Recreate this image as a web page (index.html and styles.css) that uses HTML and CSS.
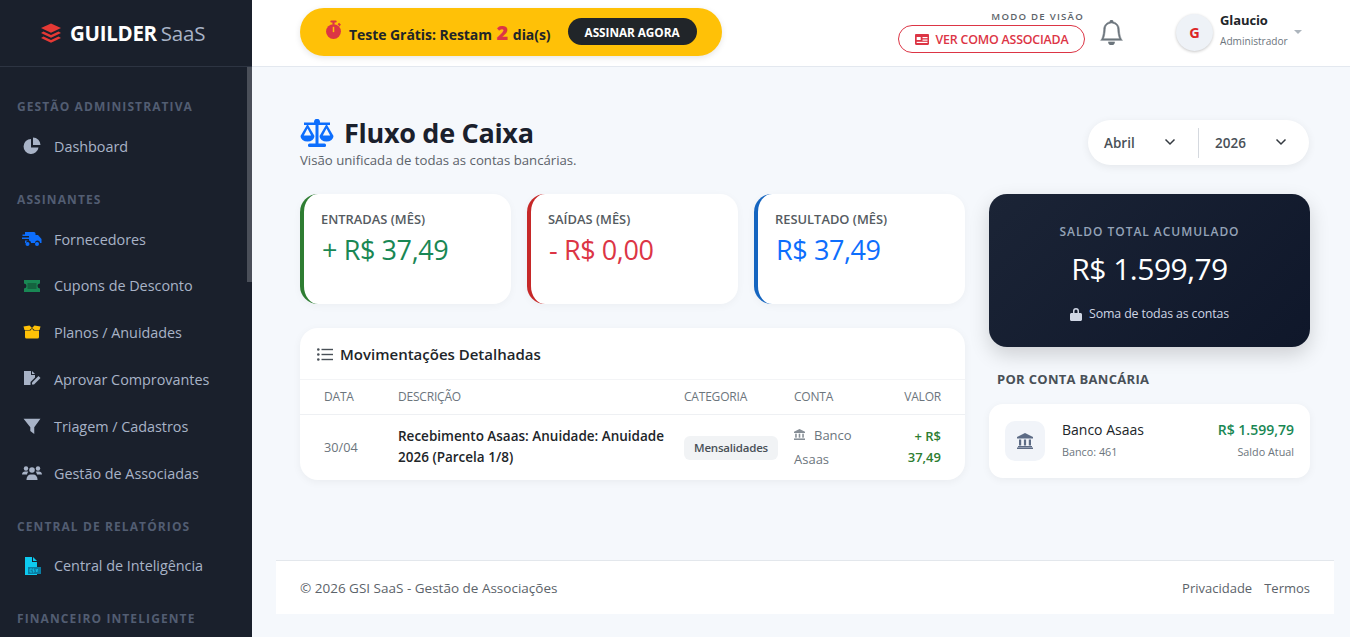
FILE: index.html
```html
<!DOCTYPE html>
<html lang="pt-br">
<head>
  <meta charset="UTF-8">
  <title>Fluxo de Caixa - GUILDER SaaS</title>
  <link rel="stylesheet" href="styles.css">
</head>
<body>
<div class="app">
  <aside class="sidebar">
    <div class="brand">
      <svg class="brand-icon" viewBox="0 0 22 20"><path d="M11 0l10 4.600-10 4.600L1 4.600z" fill="#e53935"/><path d="M3.500 8.100L1 9.500l10 4.700 10-4.700-2.500-1.400L11 11.500z" fill="#e53935"/><path d="M3.500 13.100L1 14.500l10 4.700 10-4.700-2.500-1.400L11 16.500z" fill="#e53935"/></svg>
      <span class="brand-name">GUILDER</span><span class="brand-sub">SaaS</span>
    </div>
    <nav class="menu">
      <div class="menu-title first">GESTÃO ADMINISTRATIVA</div>
      <a class="menu-item">
        <svg class="mi" viewBox="0 0 18 18" fill="#a8b3c7"><path d="M8 2a7.500 7.500 0 1 0 7.500 8.500H8z"/><path d="M10 0.500a7.500 7.500 0 0 1 7.500 7.500H10z"/></svg>
        Dashboard
      </a>
      <div class="menu-title">ASSINANTES</div>
      <a class="menu-item">
        <svg class="mi mi-wide" viewBox="0 0 20 16" fill="#0d6efd"><path d="M3 1h9a1.500 1.500 0 0 1 1.500 1.500V4h2.500l3.500 4v4h-1.500a2.500 2.500 0 0 0-5 0h-4a2.500 2.500 0 0 0-5 0H3V9.500h4V8H0V6.500h7V5H0.500V3.500H3z"/><circle cx="5.500" cy="13" r="2"/><circle cx="15" cy="13" r="2"/></svg>
        Fornecedores
      </a>
      <a class="menu-item">
        <svg class="mi" viewBox="0 0 18 14"><path d="M1 1h16v3.500a2.500 2.500 0 0 0 0 5V13H1V9.500a2.500 2.500 0 0 0 0-5z" fill="#198754"/><rect x="4.500" y="4" width="9" height="6" fill="#14633f"/></svg>
        Cupons de Desconto
      </a>
      <a class="menu-item">
        <svg class="mi" viewBox="0 0 18 14" fill="#ffc107"><path d="M2 5.500h5.500L9 3.500l1.500 2H16V12a1.500 1.500 0 0 1-1.500 1.500h-11A1.500 1.500 0 0 1 2 12z"/><path d="M0.500 1.500L6.500 0.500 9 3 6.500 5 1.500 5z"/><path d="M17.500 1.500L11.500 0.500 9 3l2.500 2 5 0z"/></svg>
        Planos / Anuidades
      </a>
      <a class="menu-item">
        <svg class="mi" viewBox="0 0 18 16" fill="#a8b3c7"><path d="M1 0h7v4h4v2.500l-4.500 4.500v3H1z"/><path d="M9 0l3 3H9z"/><path d="M9 11.500L15.500 5l2 2-6.500 6.500H9z"/></svg>
        Aprovar Comprovantes
      </a>
      <a class="menu-item">
        <svg class="mi" viewBox="0 0 16 16" fill="#a8b3c7"><path d="M0.500 1.500h15L10 9v6L6.500 12.500V9z"/></svg>
        Triagem / Cadastros
      </a>
      <a class="menu-item">
        <svg class="mi mi-wide" viewBox="0 0 20 16" fill="#a8b3c7"><circle cx="4" cy="3.500" r="2.200"/><circle cx="16" cy="3.500" r="2.200"/><circle cx="10" cy="5" r="2.800"/><path d="M0 9.500C0 7.500 1.500 6.500 3 6.500h2c.5 0 1 .1 1.300.3A4.500 4.500 0 0 0 5 9.500z"/><path d="M20 9.500c0-2-1.500-3-3-3h-2c-.5 0-1 .1-1.300.3A4.500 4.500 0 0 1 15 9.500z"/><path d="M4.500 14.500c0-3 2-5 4-5h3c2 0 4 2 4 5v.5h-11z"/></svg>
        Gestão de Associadas
      </a>
      <div class="menu-title">CENTRAL DE RELATÓRIOS</div>
      <a class="menu-item">
        <svg class="mi" viewBox="0 0 18 18"><path d="M2 0h7v5h5v13H2z" fill="#0dcaf0"/><path d="M10 0l4 4h-4z" fill="#0dcaf0"/><rect x="5" y="10" width="13" height="7" fill="#0a7ea4"/><path d="M7 12h2M7 12v3h2M11 12h-1v1.500h1V15h-1M13 12l.8 3 .8-3" stroke="#0dcaf0" stroke-width="0.800" fill="none"/></svg>
        Central de Inteligência
      </a>
      <div class="menu-title">FINANCEIRO INTELIGENTE</div>
    </nav>
    <div class="scroll-thumb"></div>
  </aside>

  <div class="main">
    <header class="topbar">
      <div class="trial">
        <svg class="trial-icon" viewBox="0 0 16 18" fill="#dc3545"><rect x="5" y="0" width="6" height="2" rx="1"/><rect x="7" y="1" width="2" height="3"/><rect x="12.200" y="2.800" width="2.500" height="2" transform="rotate(45 13.400 3.800)"/><circle cx="8" cy="10.500" r="7"/><rect x="7.300" y="6" width="1.400" height="5" fill="#ffc107"/></svg>
        <span class="trial-text">Teste Grátis: Restam <b>2</b> dia(s)</span>
        <a class="trial-btn">ASSINAR AGORA</a>
      </div>
      <div class="top-right">
        <div class="view-mode">
          <span class="view-label">MODO DE VISÃO</span>
          <a class="view-btn">
            <svg class="view-icon" viewBox="0 0 14 11"><path d="M1.200 0h11.600C13.500 0 14 .5 14 1.200v8.600c0 .7-.5 1.200-1.200 1.200H1.200C.5 11 0 10.500 0 9.800V1.200C0 .5.500 0 1.200 0z" fill="#dc3545"/><rect x="1.700" y="3" width="4" height="3" fill="#fff"/><rect x="7.500" y="3" width="5" height="1.200" fill="#fff"/><rect x="7.500" y="5.500" width="5" height="1.200" fill="#fff"/><rect x="1.700" y="7.800" width="10.800" height="1.200" fill="#fff"/></svg>
            VER COMO ASSOCIADA
          </a>
        </div>
        <svg class="bell" viewBox="0 0 16 16" fill="#6c757d" stroke="#6c757d" stroke-width="0.350"><path d="M8 16a2 2 0 0 0 2-2H6a2 2 0 0 0 2 2zM8 1.918l-.797.161A4.002 4.002 0 0 0 4 6c0 .628-.134 2.197-.459 3.742-.16.767-.376 1.566-.663 2.258h10.244c-.287-.692-.502-1.490-.663-2.258C12.134 8.197 12 6.628 12 6a4.002 4.002 0 0 0-3.203-3.920L8 1.917zM14.220 12c.223.447.481.801.780 1H1c.299-.199.557-.553.780-1C2.680 10.200 3 6.880 3 6c0-2.420 1.720-4.440 4.005-4.901a1 1 0 1 1 1.990 0A5.002 5.002 0 0 1 13 6c0 .880.320 4.200 1.220 6z"/></svg>
        <div class="user">
          <div class="avatar">G</div>
          <div class="user-info">
            <span class="user-name">Glaucio</span>
            <span class="user-role">Administrador</span>
          </div>
          <span class="caret"></span>
        </div>
      </div>
    </header>

    <div class="content">
      <div class="page">
        <div class="page-head">
          <div>
            <h1>
              <svg class="title-icon" viewBox="0 0 34 28" fill="#0d6efd"><rect x="15.500" y="0" width="3" height="25"/><circle cx="17" cy="3" r="3"/><path d="M4 3.500h26v2.500H4z"/><rect x="8" y="24.500" width="18" height="3.500" rx="1.500"/><path d="M7.500 5L0.500 17a7 5.500 0 0 0 14 0zM7.500 9.500L3.800 16.500h7.400z" fill-rule="evenodd"/><path d="M26.500 5L19.500 17a7 5.500 0 0 0 14 0zM26.500 9.500L22.800 16.500h7.400z" fill-rule="evenodd"/></svg>
              Fluxo de Caixa
            </h1>
            <p class="subtitle">Visão unificada de todas as contas bancárias.</p>
          </div>
          <div class="period">
            <div class="period-select month">Abril <svg class="chev" viewBox="0 0 12 8"><path d="M1.500 1.500L6 6l4.500-4.500" fill="none" stroke="#343a40" stroke-width="1.500"/></svg></div>
            <div class="period-select year">2026 <svg class="chev" viewBox="0 0 12 8"><path d="M1.500 1.500L6 6l4.500-4.500" fill="none" stroke="#343a40" stroke-width="1.500"/></svg></div>
          </div>
        </div>

        <div class="columns">
          <div class="col-left">
            <div class="stats">
              <div class="stat stat-green">
                <div class="stat-label">ENTRADAS (MÊS)</div>
                <div class="stat-value">+ R$ 37,49</div>
              </div>
              <div class="stat stat-red">
                <div class="stat-label">SAÍDAS (MÊS)</div>
                <div class="stat-value">- R$ 0,00</div>
              </div>
              <div class="stat stat-blue">
                <div class="stat-label">RESULTADO (MÊS)</div>
                <div class="stat-value">R$ 37,49</div>
              </div>
            </div>

            <div class="moves">
              <div class="moves-head">
                <svg class="list-icon" viewBox="0 0 16 13" fill="#495057"><circle cx="1.300" cy="1.500" r="1.300"/><circle cx="1.300" cy="6.500" r="1.300"/><circle cx="1.300" cy="11.500" r="1.300"/><rect x="4.500" y="0.800" width="11.500" height="1.400"/><rect x="4.500" y="5.800" width="11.500" height="1.400"/><rect x="4.500" y="10.800" width="11.500" height="1.400"/></svg>
                Movimentações Detalhadas
              </div>
              <table class="moves-table">
                <thead>
                  <tr>
                    <th class="c-date">DATA</th>
                    <th class="c-desc">DESCRIÇÃO</th>
                    <th class="c-cat">CATEGORIA</th>
                    <th class="c-acc">CONTA</th>
                    <th class="c-val">VALOR</th>
                  </tr>
                </thead>
                <tbody>
                  <tr>
                    <td class="c-date">30/04</td>
                    <td class="c-desc desc-text">Recebimento Asaas: Anuidade: Anuidade 2026 (Parcela 1/8)</td>
                    <td class="c-cat"><span class="tag">Mensalidades</span></td>
                    <td class="c-acc acc-text"><svg class="bank-mini" viewBox="0 0 14 14" fill="#868e96"><path d="M7 0l7 3.500V5H0V3.500z"/><rect x="1.500" y="6" width="2" height="5"/><rect x="6" y="6" width="2" height="5"/><rect x="10.500" y="6" width="2" height="5"/><rect x="0" y="12" width="14" height="2"/></svg>Banco Asaas</td>
                    <td class="c-val val-text">+ R$ 37,49</td>
                  </tr>
                </tbody>
              </table>
            </div>
          </div>

          <div class="col-right">
            <div class="balance">
              <div class="balance-label">SALDO TOTAL ACUMULADO</div>
              <div class="balance-value">R$ 1.599,79</div>
              <div class="balance-note">
                <svg class="lock" viewBox="0 0 12 14" fill="#cfd6e4"><path d="M3 6V4a3 3 0 0 1 6 0v2h1.500c.8 0 1.500.7 1.500 1.500v5c0 .8-.7 1.500-1.500 1.500h-9C.7 14 0 13.300 0 12.500v-5C0 6.700.7 6 1.500 6zm1.500 0h3V4a1.500 1.500 0 0 0-3 0z"/></svg>
                Soma de todas as contas
              </div>
            </div>
            <div class="section-title">POR CONTA BANCÁRIA</div>
            <div class="bank-card">
              <div class="bank-icon">
                <svg viewBox="0 0 16 16" fill="#5c6b85"><path d="M8 0l8 4v1.500H0V4z"/><rect x="2" y="6.500" width="2.200" height="6"/><rect x="6.900" y="6.500" width="2.200" height="6"/><rect x="11.800" y="6.500" width="2.200" height="6"/><rect x="1" y="13" width="14" height="1.300"/><rect x="0" y="14.500" width="16" height="1.500"/></svg>
              </div>
              <div class="bank-info">
                <div class="bank-name">Banco Asaas</div>
                <div class="bank-code">Banco: 461</div>
              </div>
              <div class="bank-side">
                <div class="bank-amount">R$ 1.599,79</div>
                <div class="bank-code">Saldo Atual</div>
              </div>
            </div>
          </div>
        </div>
      </div>

      <footer class="footer">
        <span>© 2026 GSI SaaS - Gestão de Associações</span>
        <span class="footer-links"><a>Privacidade</a><a>Termos</a></span>
      </footer>
    </div>
  </div>
</div>
</body>
</html>
```

FILE: styles.css
```css
* { box-sizing: border-box; }
html, body { height: 100%; }
body { margin: 0; font-family: "Open Sans", "Noto Sans", sans-serif; background: #f5f8fc; color: #212529; overflow: hidden; }
.app { display: flex; height: 637px; overflow: hidden; }

/* sidebar */
.sidebar { position: relative; width: 252px; flex: none; background: #1a202c; overflow: hidden; }
.brand { height: 67px; display: flex; align-items: center; padding-left: 40px; border-bottom: 1px solid #2d3442; color: #fff; }
.brand-icon { width: 22px; height: 21px; margin-right: 8px; }
.brand-name { font-weight: 700; letter-spacing: -.3px; font-size: 20.500px; }
.brand-sub { color: #a8b3c7; font-size: 20.500px; letter-spacing: -.2px; margin-left: 4px; }
.menu { padding-top: 32px; }
.menu-title { padding-left: 17px; font-size: 12px; line-height: 16px; font-weight: 700; letter-spacing: 1.100px; color: #525d72; margin-top: 22px; margin-bottom: 8px; }
.menu-title.first { margin-top: 0; }
.menu-item { display: flex; align-items: center; height: 46.800px; padding-left: 54px; position: relative; font-size: 14.400px; letter-spacing: -.02px; color: #a8b3c7; }
.mi { position: absolute; left: 23px; top: 14px; width: 18px; height: 18px; }
.mi-wide { left: 22px; width: 20px; }
.scroll-thumb { position: absolute; left: 247px; top: 67px; width: 5px; height: 215px; background: #4a4f59; }

/* topbar */
.main { flex: 1; min-width: 0; display: flex; flex-direction: column; }
.topbar { height: 67px; flex: none; background: #fff; border-bottom: 1px solid #e3e8ef; display: flex; align-items: center; justify-content: space-between; padding: 0 41px 0 48px; }
.trial { width: 422px; height: 48px; margin-top: -2px; border-radius: 24px; background: #ffc107; display: flex; align-items: center; padding-left: 25px; box-shadow: 0 2px 6px rgba(0,0,0,.1); }
.trial-icon { width: 17px; height: 20px; margin-right: 7px; margin-top: -5px; }
.trial-text { font-size: 14px; font-weight: 700; color: #212529; letter-spacing: -.05px; margin-top: 3px; }
.trial-text b { color: #dc3545; font-size: 20px; line-height: 1; margin: 0 1px; }
.trial-btn { margin-left: 17px; width: 129px; height: 27px; border-radius: 14px; background: #212529; color: #fff; font-size: 11.800px; font-weight: 700; display: flex; align-items: center; justify-content: center; letter-spacing: -.05px; margin-top: -1px; }
.top-right { display: flex; align-items: center; margin-top: -2px; }
.view-mode { display: flex; flex-direction: column; align-items: flex-end; margin-right: 15px; }
.view-label { font-size: 9.600px; line-height: 12px; font-weight: 600; letter-spacing: 1.250px; color: #5c636a; margin-right: 1px; }
.view-btn { margin-top: 2px; width: 187px; height: 28px; border: 1px solid #dc3545; border-radius: 14px; display: flex; align-items: center; justify-content: center; font-size: 12.400px; font-weight: 600; color: #dc3545; letter-spacing: -.2px; }
.view-icon { width: 14px; height: 11px; margin-right: 7px; }
.bell { width: 25px; height: 25px; margin-right: 52px; margin-left: -1px; }
.user { display: flex; align-items: center; position: relative; width: 133px; }
.avatar { width: 37px; height: 37px; border-radius: 50%; background: #eef2f7; color: #dc2626; font-size: 14.500px; font-weight: 700; display: flex; align-items: center; justify-content: center; box-shadow: 0 1px 3px rgba(0,0,0,.22); margin-right: 8px; }
.user-info { display: flex; flex-direction: column; margin-top: -5px; margin-left: -1px; }
.user-name { font-size: 13px; line-height: 18px; font-weight: 700; color: #212529; letter-spacing: -.1px; }
.user-role { font-size: 10.100px; line-height: 14px; color: #6c757d; margin-top: 5px; }
.caret { position: absolute; left: 118px; top: 16px; border: 4px solid transparent; border-top-color: #adb5bd; border-bottom: 0; }

/* page */
.content { flex: 1; padding: 0 16px 0 24px; display: flex; flex-direction: column; }
.page { padding: 51px 24px 0; height: 493px; }
.page-head { display: flex; justify-content: space-between; align-items: flex-start; height: 76px; }
h1 { margin: 0; display: flex; align-items: center; font-size: 27px; line-height: 30px; font-weight: 700; color: #1a202c; letter-spacing: -.3px; }
.title-icon { width: 34px; height: 28px; margin-right: 10px; }
.subtitle { margin: 3px 0 0; font-size: 13.200px; line-height: 18px; color: #5c636a; }
.period { margin: 2px 1px 0 0; width: 221px; height: 45px; background: #fff; border-radius: 23px; display: flex; align-items: center; box-shadow: 0 2px 8px rgba(0,0,0,.07); font-size: 13.500px; font-weight: 600; color: #495057; }
.period-select { display: flex; align-items: center; justify-content: space-between; padding: 0 22px 0 16px; height: 30px; }
.month { width: 111px; border-right: 1px solid #d5d9df; }
.year { width: 110px; }
.chev { width: 12px; height: 8px; margin-top: -2px; }

.columns { display: flex; gap: 24px; }
.col-left { width: 665px; }
.col-right { width: 321px; }
.stats { display: flex; gap: 16px; }
.stat { flex: 1; height: 110px; background: #fff; border-radius: 18px; border-left: 4px solid; padding: 17px 0 0 17px; box-shadow: 0 2px 8px rgba(0,0,0,.04); }
.stat-green { border-left-color: #2e7d32; }
.stat-red { border-left-color: #c62828; }
.stat-blue { border-left-color: #1565c0; }
.stat-label { font-size: 12.900px; line-height: 16px; font-weight: 600; color: #555b61; }
.stat-value { margin: 6px 0 0 1px; font-size: 27px; line-height: 34px; letter-spacing: -.4px; }
.stat-green .stat-value { color: #198754; }
.stat-red .stat-value { color: #dc3545; }
.stat-blue .stat-value { color: #0d6efd; }

.moves { margin-top: 24px; height: 152px; background: #fff; border-radius: 18px; box-shadow: 0 2px 8px rgba(0,0,0,.05); overflow: hidden; }
.moves-head { height: 52px; display: flex; align-items: center; padding: 1px 0 0 17px; border-bottom: 1px solid #f3f4f6; font-size: 15px; font-weight: 600; color: #212529; }
.list-icon { width: 16px; height: 13px; margin-right: 7px; }
.moves-table { width: 100%; border-collapse: collapse; table-layout: fixed; }
.moves-table th { height: 34px; padding: 0 12px; border-bottom: 1px solid #eef0f3; font-size: 12px; font-weight: 400; color: #6c757d; text-align: left; letter-spacing: -.2px; }
.moves-table td { height: 66px; padding: 0 12px; font-size: 12.700px; line-height: 24px; color: #6c757d; }
.moves-table .c-date { width: 86px; padding-left: 24px; }
.moves-table .c-desc { width: 286px; padding-right: 4px; }
.moves-table .c-cat { width: 110px; }
.moves-table .c-acc { width: 100px; }
.moves-table .c-val { text-align: right; padding-right: 24px; }
.moves-table .desc-text { font-size: 13.500px; line-height: 21px; font-weight: 600; color: #212529; }
.tag { display: inline-block; padding: 0 10px; line-height: 24px; background: #f1f3f5; border-radius: 6px; font-size: 11.500px; font-weight: 600; color: #495057; letter-spacing: -.2px; white-space: nowrap; }
.bank-mini { width: 11px; height: 11px; margin-right: 9px; }
.moves-table .acc-text { font-size: 13px; }
.moves-table .val-text { font-size: 13px; line-height: 21px; font-weight: 600; color: #2e7d32; }

.balance { height: 153px; border-radius: 18px; background: linear-gradient(135deg, #1b2436, #0f172a); text-align: center; padding-top: 29px; box-shadow: 0 8px 20px rgba(0,0,0,.16); }
.balance-label { font-size: 12px; line-height: 18px; font-weight: 600; letter-spacing: .95px; color: #94a3b8; }
.balance-value { margin-top: 8px; font-size: 30px; line-height: 40px; font-weight: 400; color: #fff; letter-spacing: -.5px; }
.balance-note { margin-top: 16px; display: flex; align-items: center; justify-content: center; font-size: 12.400px; line-height: 18px; color: #cfd6e4; letter-spacing: -.15px; }
.lock { width: 12px; height: 14px; margin-right: 7px; }
.section-title { margin: 22px 0 0 8px; height: 35px; font-size: 13px; line-height: 20px; font-weight: 700; color: #495057; letter-spacing: .3px; }
.bank-card { height: 74px; background: #fff; border-radius: 14px; box-shadow: 0 2px 8px rgba(0,0,0,.05); display: flex; align-items: center; padding: 0 16px; }
.bank-icon { width: 40px; height: 40px; border-radius: 10px; background: #f1f4f9; display: flex; align-items: center; justify-content: center; margin-right: 17px; }
.bank-icon svg { width: 16px; height: 16px; }
.bank-info { flex: 1; margin-top: -4px; }
.bank-name { font-size: 14px; line-height: 20px; font-weight: 500; color: #212529; }
.bank-code { font-size: 10.800px; line-height: 14px; margin-top: 5px; color: #6c757d; }
.bank-side { text-align: right; margin-top: -4px; }
.bank-amount { font-size: 14px; line-height: 20px; font-weight: 600; color: #198754; }

.footer { height: 54px; flex: none; background: #fff; border-top: 1px solid #e3e7ec; display: flex; align-items: center; justify-content: space-between; padding: 1px 24px 0; font-size: 13.500px; color: #5c636a; }
.footer-links { display: flex; gap: 12px; font-size: 13px; }
```
